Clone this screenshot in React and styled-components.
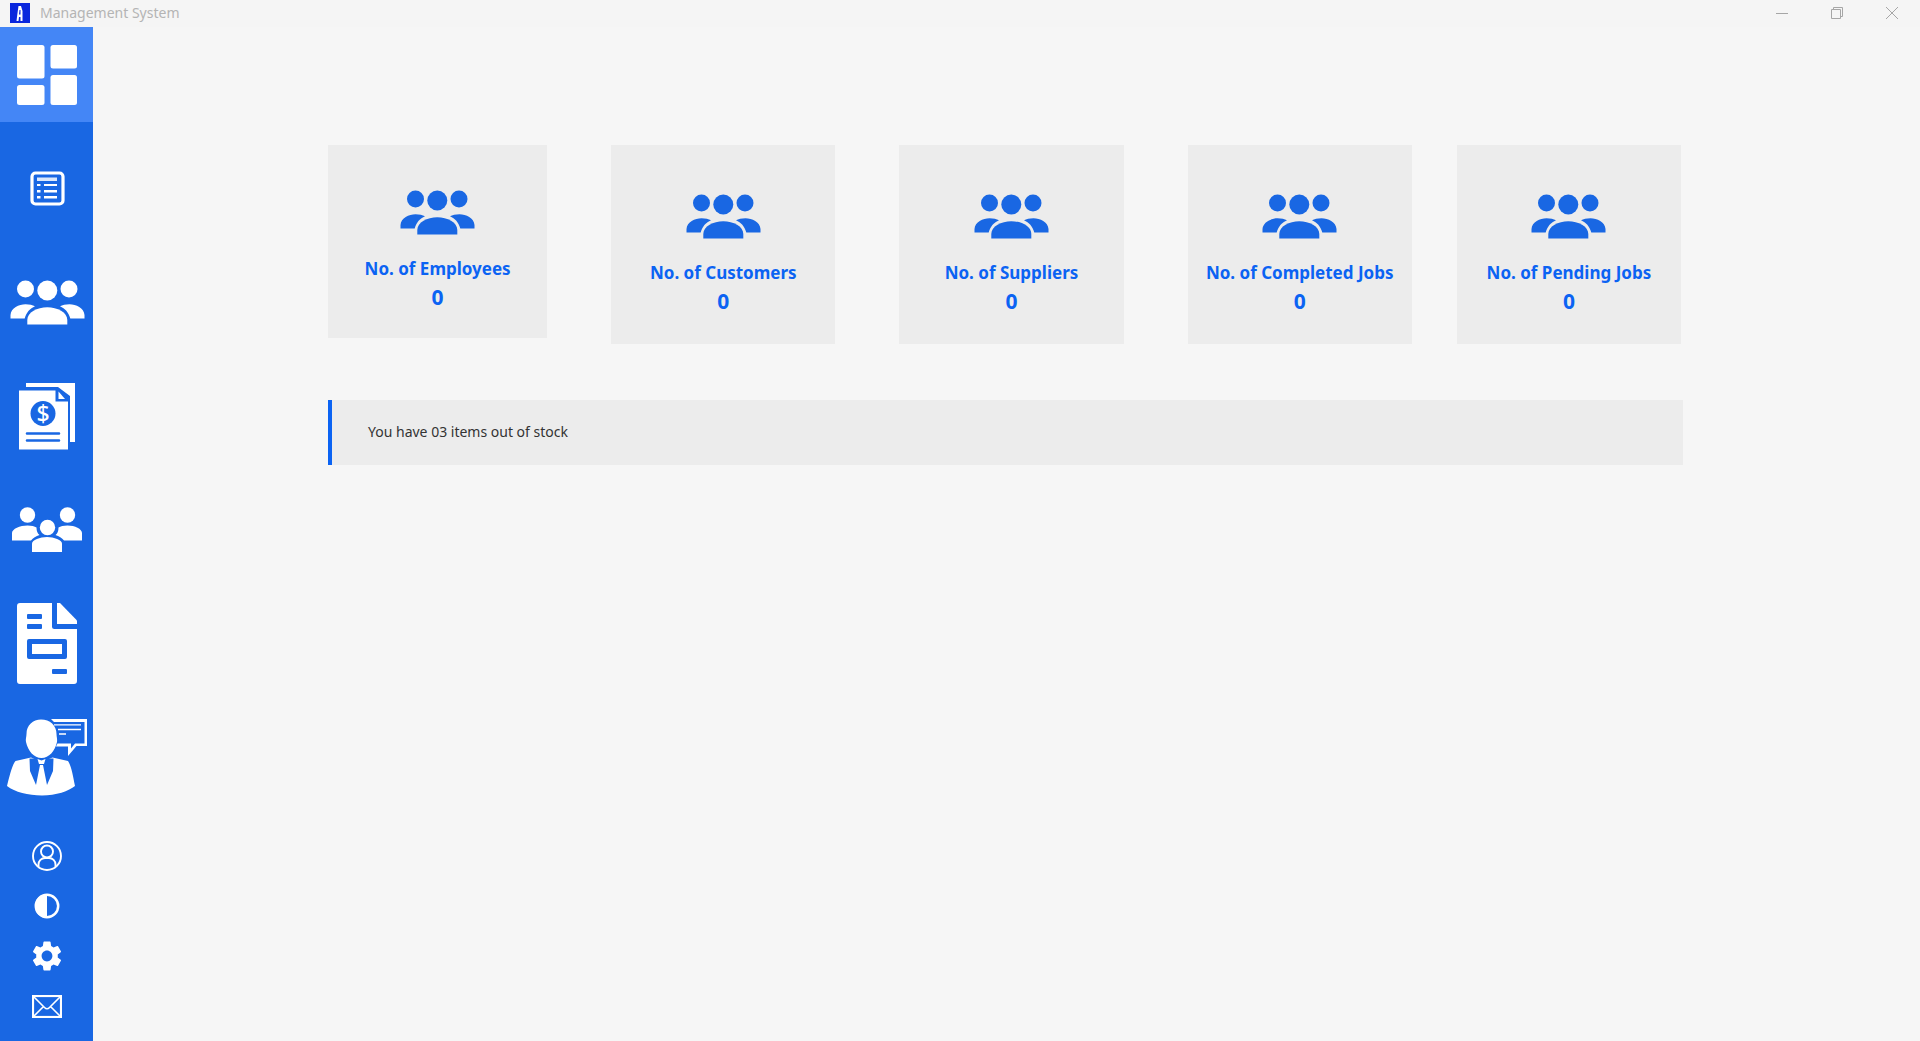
import React from "react";
import styled, { createGlobalStyle } from "styled-components";
import { MdSettings } from "react-icons/md";

const BLUE = "#1967e3";

const GlobalStyle = createGlobalStyle`
  *, *::before, *::after { box-sizing: border-box; }
  body {
    margin: 0;
    background: #f6f6f6;
    font-family: "Noto Sans", "Open Sans", sans-serif;
  }
`;

const Window = styled.div`
  display: flex;
  flex-direction: column;
  min-height: 100vh;
`;

const TitleBar = styled.header`
  display: flex;
  align-items: center;
  height: 27px;
  padding: 0 1px 1px 10px;
  background: #f5f5f5;
`;

const Title = styled.h1`
  flex: 1;
  margin: 0 0 0 10px;
  font-size: 14px;
  line-height: 20px;
  font-weight: 400;
  color: #b4b4b4;
`;

const WindowButton = styled.button`
  display: flex;
  align-items: center;
  justify-content: center;
  width: 55px;
  height: 26px;
  padding: 0;
  border: 0;
  background: transparent;
  color: #a6a6a6;
`;

const Body = styled.div`
  display: flex;
  flex: 1;
`;

const Sidebar = styled.nav`
  display: flex;
  flex-direction: column;
  flex: none;
  width: 93px;
  padding-bottom: 10px;
  background: ${BLUE};
`;

const PageLinks = styled.div`
  display: flex;
  flex-direction: column;
  gap: 19px;
`;

const ToolLinks = styled.div`
  display: flex;
  flex-direction: column;
  margin-top: auto;
`;

const NavButton = styled.button`
  display: flex;
  align-items: center;
  justify-content: center;
  width: 100%;
  height: ${(p) => (p.$small ? 50 : 95)}px;
  padding: 0 0 0 1px;
  border: 0;
  background: ${(p) => (p.$active ? "#4486f6" : "transparent")};
  color: #fff;

  svg { display: block; flex: none; }
`;

const Main = styled.main`
  flex: 1;
  min-width: 0;
  padding: 118px 237px 40px 235px;
`;

const Cards = styled.section`
  display: grid;
  grid-template-columns: 219fr 224fr 224fr 493fr;
  gap: 64px;
  align-items: start;
  padding-right: 2px;
`;

const JobCards = styled.div`
  display: grid;
  grid-template-columns: 1fr 1fr;
  gap: 45px;
`;

const Card = styled.article`
  display: flex;
  flex-direction: column;
  align-items: center;
  padding: ${(p) => (p.$compact ? "45px 0 27px" : "49px 0 29px")};
  background: #ececec;
  color: ${BLUE};
`;

const CardLabel = styled.h2`
  margin: 22px 0 0;
  font-size: 17px;
  line-height: 24px;
  font-weight: 700;
  white-space: nowrap;
  color: #0b63f3;
`;

const CardValue = styled.p`
  margin: 2px 0 0;
  font-size: 21px;
  line-height: 28px;
  font-weight: 700;
  color: #0b63f3;
`;

const Notice = styled.p`
  margin: 56px 0 0;
  padding: 20px 36px 21px;
  border-left: 4px solid #0b63f3;
  background: #ececec;
  font-size: 14px;
  line-height: 24px;
  color: #333;
`;

const Logo = () => (
  <svg width="20" height="20" viewBox="0 0 20 20" aria-hidden="true">
    <rect width="20" height="20" fill="#0a27dd" />
    <path fill="#fff" fillRule="evenodd" d="M8.500 3h2.500l1.500 5v10h-2v-4H9l-.5 4H6.500l1-8zM9.500 7 9 11.500h1.500V7z" />
  </svg>
);

const DashboardIcon = () => (
  <svg width="60" height="60" viewBox="0 0 60 60" fill="currentColor" aria-hidden="true">
    <rect width="27.500" height="33.500" rx="2.500" />
    <rect x="33.500" width="26.500" height="23.500" rx="2.500" />
    <rect y="40" width="27.500" height="20" rx="2.500" />
    <rect x="33.500" y="30" width="26.500" height="30" rx="2.500" />
  </svg>
);

const ListIcon = () => (
  <svg width="35" height="35" viewBox="0 0 35 35" fill="currentColor" aria-hidden="true">
    <rect x="2" y="2" width="31" height="31" rx="3.500" fill="none" stroke="currentColor" strokeWidth="3.200" />
    <rect x="7" y="6.500" width="20" height="3.500" opacity=".85" />
    <path d="M7 13h3.500v2H7zM14 13h13v2H14zM7 19h3.500v2.500H7zM14 19h13v2.500H14zM7 25h3.500v2.500H7zM14 25h13v2.500H14z" />
  </svg>
);

const PeopleIcon = () => (
  <svg width="75" height="45" viewBox="0 0 75 45" fill="currentColor" aria-hidden="true">
    <circle cx="15.500" cy="9" r="8.500" />
    <circle cx="37.300" cy="10.500" r="10" />
    <circle cx="59" cy="9" r="8.500" />
    <path d="M.5 38.500V35C1 28 9 24.300 15.500 24.300c4 0 7 .7 9.500 2-5 2.200-8.500 6-10.300 12.200z" />
    <path d="M74.500 38.500V35C74 28 66 24.300 59.500 24.300c-4 0-7 .7-9.500 2 5 2.200 8.500 6 10.300 12.200z" />
    <path d="M17.300 44.500V40c0-8 10-12.800 20-12.800s20 4.800 20 12.800v4.500z" />
  </svg>
);

const InvoiceIcon = () => (
  <svg width="56" height="68" viewBox="0 0 56 68" fill="currentColor" aria-hidden="true">
    <path d="M7 0h49v59h-5V13L39 4H7z" />
    <path d="M0 7.500h36.500V18.500H49V66.500H0z" />
    <path d="M39.500 8.500 46 16h-6.500z" />
    <circle cx="24" cy="30.500" r="12.500" fill={BLUE} />
    <text x="24" y="38.500" textAnchor="middle" fontFamily="Noto Sans" fontSize="23" fontWeight="500">$</text>
    <path d="M8 50.500h32M8 57.500h32" stroke={BLUE} strokeWidth="2.600" strokeLinecap="round" />
  </svg>
);

const TeamIcon = () => (
  <svg width="70" height="47" viewBox="0 0 70 47" fill="currentColor" aria-hidden="true">
    <circle cx="15.500" cy="8" r="7.700" />
    <circle cx="55.500" cy="8" r="7.700" />
    <path d="M0 33.500V26c0-4 8-7.500 15.500-7.500 4 0 7 .7 9 2C24.500 24 25.500 26.500 27.500 28c-3.500 1.200-6.500 3-8.500 5.500z" />
    <path d="M70 33.500V26c0-4-7-7.500-14.500-7.500-4 0-7 .7-9 2 0 3.500-1 6-3 7.500 3.500 1.200 6.500 3 8.500 5.500z" />
    <circle cx="35.500" cy="20.500" r="7.700" />
    <path d="M20 45v-8.500c0-3.500 8-6.500 15-6.500s15 3 15 6.500V45z" />
  </svg>
);

const DocumentIcon = () => (
  <svg width="60" height="84" viewBox="0 0 60 84" fill="currentColor" aria-hidden="true">
    <path d="M3 0h32v23.500a2.500 2.500 0 0 0 2.500 2.500H60v52a3 3 0 0 1-3 3H3a3 3 0 0 1-3-3V3a3 3 0 0 1 3-3z" />
    <path d="M40 0h3l17 17.500V21H40z" />
    <g fill={BLUE}>
      <rect x="10" y="11" width="15" height="5" rx="1" />
      <rect x="10" y="21" width="15" height="5" rx="1" />
      <rect x="35" y="66" width="15" height="5" rx="1" />
      <path fillRule="evenodd" d="M12 36h36a2 2 0 0 1 2 2v16a2 2 0 0 1-2 2H12a2 2 0 0 1-2-2V38a2 2 0 0 1 2-2zm3 5v10h30V41z" />
    </g>
  </svg>
);

const SupportIcon = () => (
  <svg width="80" height="80" viewBox="0 0 80 80" fill="currentColor" aria-hidden="true">
    <path d="M44 0h36v27H69.500L61 37v-9.500H49l1.500-3H64v5l4-5h9.500V3H47z" />
    <path d="M47 5.800h27M51 10.500h23M52 15h7" stroke="currentColor" strokeWidth="1.300" />
    <path d="M34 .5c9 0 15.500 6 15.500 14.500 0 3 1 5 .5 8C48 32 42 39 34.500 39S21 32 19 23c-.6-3 .5-5 .5-8C19.500 6 26 .5 34 .5z" />
    <path d="M24 38.500 8.500 42C5 46 2 59 0 67c8 6 21 9.500 35 9.500S62 72 68 67c-2-10-3.500-20-7-25l-15.500-3.500L34.500 43z" />
    <path d="M22.500 39.500 46.500 39.500 46 52 40 66h-3L34.500 70 32 66h-3L23 52z" fill={BLUE} />
    <path d="m30.500 40 4 1.500 4-1.500-1.500 5h-5zM33 46h3l4 20-5.500 8L29 66z" />
  </svg>
);

const AccountIcon = () => (
  <svg width="30" height="30" viewBox="0 0 30 30" fill="none" stroke="currentColor" strokeWidth="1.900" aria-hidden="true">
    <circle cx="15" cy="15" r="14" />
    <circle cx="15" cy="10.500" r="6" />
    <path d="M6.500 26v-2.500a6.500 6.500 0 0 1 6.500-6.500h4a6.500 6.500 0 0 1 6.500 6.500V26" />
  </svg>
);

const ContrastIcon = () => (
  <svg width="26" height="26" viewBox="0 0 26 26" fill="currentColor" aria-hidden="true">
    <circle cx="13" cy="13" r="11.200" fill="none" stroke="currentColor" strokeWidth="2.500" />
    <path d="M13 1v24A12 12 0 0 1 13 1z" />
  </svg>
);

const MailIcon = () => (
  <svg width="30" height="23" viewBox="0 0 30 23" fill="none" stroke="currentColor" strokeWidth="1.600" aria-hidden="true">
    <rect x="1" y="1" width="28" height="21" strokeWidth="2.200" />
    <path d="m2 2 10.500 10.500q2.500 2.500 5 0L28 2M2 21l9.500-9.500M28 21l-9.500-9.500" />
  </svg>
);

const MinimizeIcon = () => (
  <svg width="12" height="12" viewBox="0 0 12 12" fill="none" stroke="currentColor" aria-hidden="true">
    <path d="M0 6.500h12" />
  </svg>
);

const RestoreIcon = () => (
  <svg width="12" height="12" viewBox="0 0 12 12" fill="none" stroke="currentColor" aria-hidden="true">
    <path d="M.5 2.500h9v9h-9zM2.500 2.500v-2h9v9h-2" />
  </svg>
);

const CloseIcon = () => (
  <svg width="12" height="12" viewBox="0 0 12 12" fill="none" stroke="currentColor" aria-hidden="true">
    <path d="m0 0 12 12M12 0 0 12" />
  </svg>
);

const pages = [
  { name: "Dashboard", Icon: DashboardIcon },
  { name: "Inventory", Icon: ListIcon },
  { name: "Employees", Icon: PeopleIcon },
  { name: "Invoices", Icon: InvoiceIcon },
  { name: "Customers", Icon: TeamIcon },
  { name: "Jobs", Icon: DocumentIcon },
  { name: "Suppliers", Icon: SupportIcon },
];

const tools = [
  { name: "Account", icon: <AccountIcon /> },
  { name: "Theme", icon: <ContrastIcon /> },
  { name: "Settings", icon: <MdSettings size={36} /> },
  { name: "Messages", icon: <MailIcon /> },
];

function StatCard({ label, value, compact }) {
  return (
    <Card $compact={compact}>
      <PeopleIcon />
      <CardLabel>{label}</CardLabel>
      <CardValue>{value}</CardValue>
    </Card>
  );
}

export default function App() {
  return (
    <Window>
      <GlobalStyle />
      <TitleBar>
        <Logo />
        <Title>Management System</Title>
        <WindowButton aria-label="Minimize"><MinimizeIcon /></WindowButton>
        <WindowButton aria-label="Restore"><RestoreIcon /></WindowButton>
        <WindowButton aria-label="Close"><CloseIcon /></WindowButton>
      </TitleBar>
      <Body>
        <Sidebar>
          <PageLinks>
            {pages.map(({ name, Icon }, i) => (
              <NavButton key={name} aria-label={name} $active={i === 0}>
                <Icon />
              </NavButton>
            ))}
          </PageLinks>
          <ToolLinks>
            {tools.map(({ name, icon }) => (
              <NavButton key={name} aria-label={name} $small>
                {icon}
              </NavButton>
            ))}
          </ToolLinks>
        </Sidebar>
        <Main>
          <Cards>
            <StatCard label="No. of Employees" value={0} compact />
            <StatCard label="No. of Customers" value={0} />
            <StatCard label="No. of Suppliers" value={0} />
            <JobCards>
              <StatCard label="No. of Completed Jobs" value={0} />
              <StatCard label="No. of Pending Jobs" value={0} />
            </JobCards>
          </Cards>
          <Notice>You have 03 items out of stock</Notice>
        </Main>
      </Body>
    </Window>
  );
}
